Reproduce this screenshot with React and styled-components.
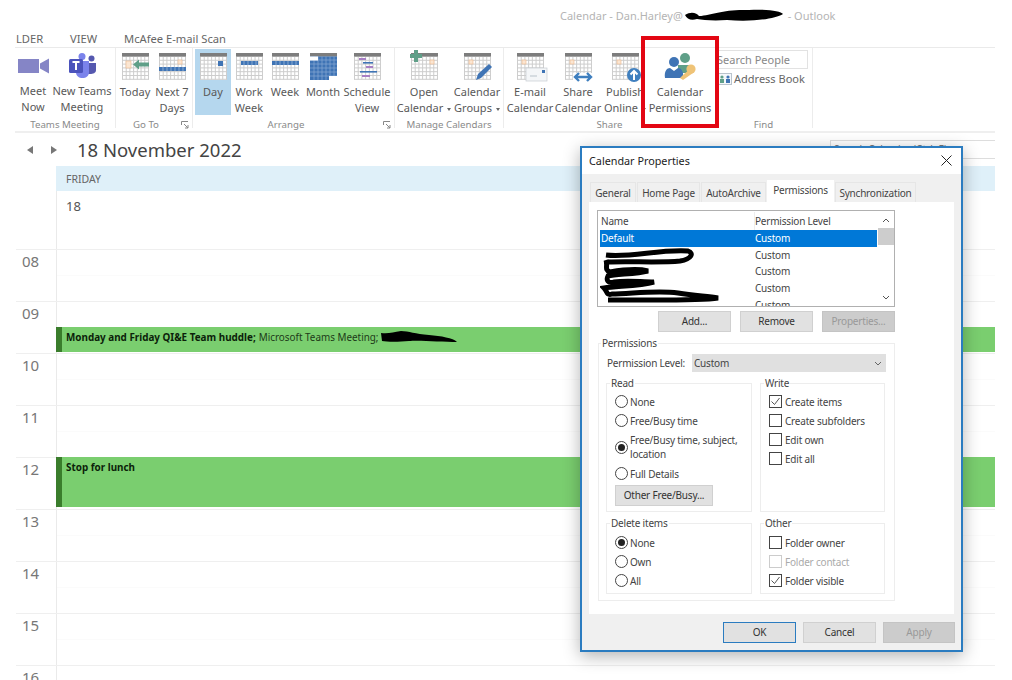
import styled, { createGlobalStyle } from 'styled-components'

const GlobalStyle = createGlobalStyle`
  html, body {
    margin: 0;
    padding: 0;
    background: #fff;
  }
  body {
    font-family: "Noto Sans", "Open Sans", sans-serif;
  }
`

const Page = styled.div`
  position: relative;
  width: 1012px;
  height: 680px;
  overflow: hidden;
  background: #fff;
  color: #555;
`

const TitleBar = styled.div`
  display: flex;
  align-items: center;
  height: 30px;
  padding-left: 560px;
  font-size: 11px;
  color: #b4b4b4;
  white-space: nowrap;
`

const TabBar = styled.div`
  display: flex;
  align-items: center;
  height: 17px;
  padding-left: 16px;
  font-size: 11.2px;
  color: #666;
`

const RibbonTab = styled.span`
  width: ${p => p.$w}px;
`

const Ribbon = styled.div`
  display: flex;
  height: 83px;
  margin: 0 17px 0 15px;
  border-top: 1px solid #eaeaea;
  border-bottom: 2px solid #efefef;
`

const Group = styled.div`
  display: flex;
  flex-direction: column;
  box-sizing: border-box;
  width: ${p => p.$w}px;
  border-right: ${p => (p.$last ? 'none' : '1px solid #ececec')};
  margin-bottom: 3px;
`

const GroupButtons = styled.div`
  display: flex;
  flex: none;
  height: 67px;
  padding-top: 1px;
  padding-left: ${p => p.$pad || 0}px;
`

const GroupLabel = styled.div`
  position: relative;
  flex: none;
  height: 14px;
  margin-top: 2px;
  padding-right: ${p => p.$shift || 0}px;
  font-size: 9.7px;
  line-height: 14px;
  text-align: center;
  color: #8a8a8a;
`

const Launcher = styled.svg`
  position: absolute;
  right: 3px;
  top: 3px;
`

const RibbonButton = styled.div`
  display: flex;
  flex-direction: column;
  align-items: center;
  flex: none;
  width: ${p => p.$w}px;
  height: 66px;
  padding-top: 4px;
  box-sizing: border-box;
  background: ${p => (p.$active ? '#b5d7ee' : 'transparent')};
`

const IconBox = styled.div`
  display: flex;
  justify-content: center;
  align-items: ${p => p.$align || 'flex-start'};
  height: 27px;
  margin-bottom: 4px;
`

const ButtonLine = styled.span`
  font-size: 11px;
  line-height: 16px;
  height: 16px;
  white-space: nowrap;
  color: #595959;
`

const Caret = styled.i`
  display: inline-block;
  margin-left: 4px;
  vertical-align: middle;
  border-left: 2px solid transparent;
  border-right: 2px solid transparent;
  border-top: 3px solid #666;
`

const FindColumn = styled.div`
  display: flex;
  flex-direction: column;
  padding: 1px 0 0 2px;
`

const SearchPeople = styled.div`
  width: 91px;
  height: 19px;
  box-sizing: border-box;
  border: 1px solid #e2e2e2;
  border-left: none;
  font-size: 11px;
  line-height: 17px;
  color: #888;
`

const AddressBook = styled.div`
  display: flex;
  align-items: center;
  gap: 2px;
  margin-top: 2px;
  padding-left: 1px;
  font-size: 11px;
  color: #666;
`

const DateNav = styled.div`
  display: flex;
  align-items: center;
  height: 33px;
  margin-right: 17px;
  padding-left: 27px;
`

const NavArrow = styled.i`
  width: 0;
  height: 0;
  margin-right: ${p => p.$gap}px;
  border-top: 4px solid transparent;
  border-bottom: 4px solid transparent;
  border-right: ${p => (p.$left ? '6px solid #777' : 'none')};
  border-left: ${p => (p.$left ? 'none' : '6px solid #777')};
`

const DateTitle = styled.h1`
  margin: 0;
  font-size: 18.5px;
  font-weight: 400;
  color: #444;
  white-space: nowrap;
`

const SearchCalendar = styled.div`
  width: 165px;
  height: 19px;
  margin-left: auto;
  padding-left: 3px;
  box-sizing: border-box;
  border: 1px solid #ddd;
  border-right: none;
  font-size: 10px;
  line-height: 17px;
  color: #777;
`

const Calendar = styled.div`
  margin-right: 17px;
`

const DayHead = styled.div`
  margin-left: 56px;
  height: 25px;
  padding-left: 10px;
  background: #dff0f9;
  font-size: 10.5px;
  line-height: 26px;
  color: #666;
`

const AllDay = styled.div`
  margin-left: 56px;
  height: 58px;
  padding: 6px 0 0 9px;
  box-sizing: border-box;
  border-left: 1px solid #eaeaea;
  font-size: 13px;
  line-height: 18px;
  color: #555;
`

const HourRow = styled.div`
  display: flex;
  height: 52px;
  margin-left: 16px;
  box-sizing: border-box;
  border-top: 1px solid #efefef;
  &:first-of-type {
    border-top: 2px solid #e3e3e3;
  }
`

const HourLabel = styled.div`
  width: 40px;
  padding: 1px 0 0 6px;
  box-sizing: border-box;
  font-size: 15px;
  line-height: 20px;
  color: #777;
`

const Slots = styled.div`
  display: flex;
  flex-direction: column;
  flex: 1;
  border-left: 1px solid #eaeaea;
`

const Slot = styled.div`
  flex: 1;
  &:first-child {
    border-bottom: 1px solid #fbfbfb;
  }
`

const Event = styled.div`
  display: flex;
  align-items: flex-start;
  height: ${p => (p.$tall ? 50 : 25)}px;
  margin: -1px 0 0 -1px;
  padding: 2px 0 0 4px;
  box-sizing: border-box;
  background: #7ace6f;
  border-left: 6px solid #3a7d2c;
  font-size: 9.9px;
  line-height: 16px;
  color: #1d3a18;
  white-space: nowrap;
`

const EventTitle = styled.b`
  font-weight: 700;
  color: #0c1f0a;
  margin-right: 3px;
`

const RedBox = styled.div`
  position: absolute;
  left: 641px;
  top: 36px;
  width: 78px;
  height: 92px;
  box-sizing: border-box;
  border: 4px solid #e30613;
`

const Dialog = styled.div`
  position: absolute;
  left: 580px;
  top: 146px;
  display: flex;
  flex-direction: column;
  width: 383px;
  height: 506px;
  box-sizing: border-box;
  border: 2px solid #2b7cc0;
  background: #f0f0f0;
  box-shadow: 0 4px 16px rgba(0, 0, 0, 0.3);
  font-size: 10px;
  letter-spacing: -0.2px;
  color: #444;
`

const DialogTitle = styled.div`
  display: flex;
  align-items: center;
  justify-content: space-between;
  height: 26px;
  padding: 0 9px 2px 7px;
  box-sizing: border-box;
  background: #fff;
  font-size: 10.8px;
  letter-spacing: 0;
  color: #222;
`

const TabStrip = styled.div`
  display: flex;
  align-items: flex-end;
  height: 22px;
  margin-top: 6px;
  padding-left: 8px;
  gap: 1px;
`

const DialogTab = styled.div`
  width: ${p => p.$w}px;
  height: ${p => (p.$active ? 22 : 20)}px;
  box-sizing: border-box;
  background: ${p => (p.$active ? '#fff' : '#f0f0f0')};
  border: 1px solid ${p => (p.$active ? '#fff' : '#e6e6e6')};
  border-bottom: none;
  text-align: center;
  line-height: ${p => (p.$active ? 18 : 21)}px;
  color: #444;
  white-space: nowrap;
`

const TabPanel = styled.div`
  width: 365px;
  height: 412px;
  margin-left: 7px;
  padding: 8px 0 0 8px;
  box-sizing: border-box;
  background: #fff;
`

const UserList = styled.div`
  position: relative;
  width: 298px;
  height: 97px;
  box-sizing: border-box;
  border: 1px solid #b0b0b0;
  padding: 1px 0 0 2px;
  overflow: hidden;
`

const ListRow = styled.div`
  display: flex;
  width: 277px;
  height: ${p => (p.$head ? 18 : 16.7)}px;
  line-height: ${p => (p.$head ? 18 : 16.7)}px;
  background: ${p => (p.$selected ? '#0078d7' : 'transparent')};
  color: ${p => (p.$selected ? '#fff' : '#444')};
`

const NameCell = styled.span`
  width: 155px;
  padding-left: 1px;
  box-sizing: border-box;
  border-right: ${p => (p.$head ? '1px solid #eee' : 'none')};
`

const LevelCell = styled.span`
  padding-left: 0;
`

const ScrollBar = styled.div`
  position: absolute;
  right: 0;
  top: 0;
  bottom: 0;
  width: 16px;
`

const ScrollThumb = styled.div`
  position: absolute;
  left: 0;
  right: 0;
  top: 17px;
  height: 17px;
  background: #cdcdcd;
`

const ScrollArrow = styled.svg`
  position: absolute;
  left: 4px;
  ${p => (p.$down ? 'bottom: 6px;' : 'top: 7px;')}
`

const Scribble = styled.svg`
  flex: none;
  ${p => p.$over && 'position: absolute; left: 2px; top: 35px;'}
`

const ListButtons = styled.div`
  display: flex;
  justify-content: flex-end;
  gap: 9px;
  width: 298px;
  margin-top: 4px;
`

const PushButton = styled.div`
  width: ${p => p.$w || 73}px;
  height: 21px;
  box-sizing: border-box;
  background: ${p => (p.$disabled ? '#cccccc' : '#e1e1e1')};
  border: 1px solid ${p => (p.$default ? '#2b7cc0' : p.$disabled ? '#c4c4c4' : '#d0d0d0')};
  text-align: center;
  line-height: 19px;
  color: ${p => (p.$disabled ? '#999' : '#333')};
  white-space: nowrap;
`

const Box = styled.fieldset`
  margin: 0;
  min-width: 0;
  box-sizing: border-box;
  border: 1px solid #ededed;
  padding: ${p => p.$pad || '3px 0 0 8px'};
  height: ${p => p.$h}px;
`

const Legend = styled.legend`
  padding: 0 1px;
  margin-left: -5px;
  line-height: 14px;
  color: #444;
`

const PermissionsBox = styled(Box)`
  width: 297px;
  margin: 4px 0 0 1px;
  padding: 0 0 0 7px;
`

const LevelRow = styled.div`
  display: flex;
  align-items: center;
  height: 18px;
  margin-top: 4px;
`

const LevelLabel = styled.span`
  width: 86px;
  padding-left: 1px;
  box-sizing: border-box;
  white-space: nowrap;
`

const LevelSelect = styled.div`
  display: flex;
  align-items: center;
  justify-content: space-between;
  width: 194px;
  height: 18px;
  padding: 0 4px 0 2px;
  box-sizing: border-box;
  background: #e0e0e0;
`

const BoxGrid = styled.div`
  display: grid;
  grid-template-columns: 146px 125px;
  column-gap: 8px;
  row-gap: 4px;
  margin-top: 4px;
`

const Option = styled.div`
  display: flex;
  align-items: center;
  gap: ${p => (p.$check ? 3 : 2)}px;
  height: ${p => (p.$multi ? 34 : 19)}px;
  line-height: 14px;
  color: ${p => (p.$dim ? '#aaa' : '#444')};
`

const Radio = styled.span`
  flex: none;
  display: flex;
  align-items: center;
  justify-content: center;
  width: 13px;
  height: 13px;
  box-sizing: border-box;
  border: 1px solid #444;
  border-radius: 50%;
  &::after {
    content: '';
    display: ${p => (p.$on ? 'block' : 'none')};
    width: 7px;
    height: 7px;
    border-radius: 50%;
    background: #222;
  }
`

const Check = styled.span`
  flex: none;
  display: flex;
  align-items: center;
  justify-content: center;
  width: 13px;
  height: 13px;
  box-sizing: border-box;
  border: 1px solid ${p => (p.$dim ? '#ccc' : '#444')};
`

const OtherButton = styled(PushButton)`
  margin-top: 2px;
`

const DialogFooter = styled.div`
  display: flex;
  justify-content: flex-end;
  gap: 7px;
  margin-top: 8px;
  padding-right: 6px;
`

function CalIcon({ children }) {
  const cols = [0, 1, 2, 3, 4, 5, 6, 7]
  const rows = [0, 1, 2, 3, 4, 5, 6]
  return (
    <svg width="27" height="27" viewBox="0 0 27 27" style={{ overflow: 'visible' }}>
      <rect x="0" y="0" width="27" height="27" fill="#fff" />
      {cols.map(i => <path key={i} d={`M${0.5 + i * 3.71} 3V26.5`} stroke="#cdcdcd" strokeWidth="1" />)}
      {rows.map(i => <path key={i} d={`M0 ${3.5 + i * 3.8}H27`} stroke="#cdcdcd" strokeWidth="1" />)}
      <rect x="0" y="0" width="27" height="3.5" fill="#7d7d7d" />
      {children}
    </svg>
  )
}

const Orange = () => <rect x="19" y="7" width="4" height="4" fill="#fbe6d2" stroke="#eeb98c" strokeWidth="0.6" />

const Band = ({ x, y, w }) => (
  <>
    <rect x={x} y={y} width={w} height="4" fill="#3f74b5" />
    {[4, 8, 12, 16, 20, 24].filter(c => c > x && c < x + w).map(c => (
      <path key={c} d={`M${c} ${y}v4`} stroke="#9db8d8" strokeWidth="0.8" />
    ))}
  </>
)

const iconParts = {
  today: (
    <>
      <rect x="4" y="8" width="5" height="7" fill="#fbe6d2" stroke="#eeb98c" strokeWidth="0.6" />
      <path d="M11 11.5L17 6.5V9.5H27V13.5H17V16.5Z" fill="#5f9f88" />
    </>
  ),
  next: (
    <>
      <Orange />
      <Band x={0} y={14} w={27} />
    </>
  ),
  day: <rect x="18" y="8" width="5" height="5" fill="#3f74b5" />,
  work: <Band x={5} y={8} w={17} />,
  week: <Band x={0} y={8} w={27} />,
  month: (
    <>
      <rect x="0" y="3.5" width="27" height="23.5" fill="#3f74b5" />
      {[4, 8, 12, 16, 20, 24].map(x => <path key={x} d={`M${x} 3.5V27`} stroke="#86a9d3" strokeWidth="0.7" />)}
      {[7, 11, 15, 19, 23].map(y => <path key={y} d={`M0 ${y}H27`} stroke="#86a9d3" strokeWidth="0.7" />)}
      <rect x="0" y="3.5" width="8" height="4" fill="#fff" />
      <rect x="19" y="23" width="8" height="4" fill="#fff" />
    </>
  ),
  schedule: (
    <>
      <rect x="5" y="5" width="7" height="2" fill="#a77fc4" />
      <rect x="9" y="9" width="10" height="1.6" fill="#3f74b5" />
      <rect x="12" y="13" width="7" height="2" fill="#a77fc4" />
      <rect x="6" y="18" width="17" height="1.6" fill="#3f74b5" />
      <rect x="8" y="22" width="8" height="2" fill="#a77fc4" />
    </>
  ),
  open: (
    <>
      <Orange />
      <path d="M3 -3H7V1H11V5H7V9H3V5H-1V1H3Z" fill="#5f9f88" />
    </>
  ),
  groups: (
    <>
      <rect x="5" y="7" width="4" height="4" fill="#fbe6d2" stroke="#eeb98c" strokeWidth="0.6" />
      <path d="M12 27L14 21L25 11L28 14L17 25Z" fill="#3f74b5" />
    </>
  ),
  email: (
    <>
      <rect x="5" y="7" width="4" height="4" fill="#fbe6d2" stroke="#eeb98c" strokeWidth="0.6" />
      <rect x="9" y="15" width="21" height="13" fill="#f4f6f8" stroke="#c7ccd1" strokeWidth="0.7" />
      <rect x="25" y="17" width="3" height="3" fill="#3f74b5" />
      <path d="M13 23H20" stroke="#ccd3da" strokeWidth="1.5" />
    </>
  ),
  share: (
    <>
      <rect x="5" y="7" width="4" height="4" fill="#fbe6d2" stroke="#eeb98c" strokeWidth="0.6" />
      <rect x="8" y="20" width="19" height="8" fill="#fff" />
      <path d="M10 24H26M14 20L10 24L14 28M22 20L26 24L22 28" fill="none" stroke="#3f7fbf" strokeWidth="2.4" />
    </>
  ),
  publish: (
    <>
      <rect x="5" y="7" width="4" height="4" fill="#fbe6d2" stroke="#eeb98c" strokeWidth="0.6" />
      <circle cx="22" cy="22" r="7" fill="#3f7fbf" />
      <path d="M22 27V18M18.5 21.5L22 18L25.5 21.5" fill="none" stroke="#fff" strokeWidth="2" />
    </>
  ),
}

function VideoIcon() {
  return (
    <svg width="31" height="16" viewBox="0 0 31 16">
      <path d="M0 1H21V15H0ZM22 5.5L31 0.5V15.5L22 10.5Z" fill="#8585c6" />
    </svg>
  )
}

function TeamsIcon() {
  return (
    <svg width="27" height="25" viewBox="0 0 27 25">
      <circle cx="22.5" cy="5.5" r="3" fill="#5558af" />
      <path d="M18 10H27V17C27 20 24 21 21 21H18Z" fill="#5558af" />
      <circle cx="13" cy="3.5" r="3.5" fill="#7b83eb" />
      <path d="M7 8H20V19C20 23 17 25 13.5 25C10 25 7 23 7 19Z" fill="#7b83eb" />
      <rect x="0" y="6" width="14" height="14" rx="1.5" fill="#4b53bc" />
      <path d="M3.5 9H10.5M7 9V17" stroke="#fff" strokeWidth="2" fill="none" />
    </svg>
  )
}

function PermissionsIcon() {
  return (
    <svg width="32" height="27" viewBox="0 0 32 27">
      <circle cx="21" cy="5" r="5" fill="#5f9f88" />
      <path d="M14 12H27V20H14Z" fill="#5f9f88" />
      <circle cx="10" cy="9" r="5" fill="#3f74b5" />
      <path d="M1 25C0 18 3 15 6 15L10 18L14 15C17 15 20 18 19 25Z" fill="#3f74b5" />
      <circle cx="27" cy="16" r="4.6" fill="#efc377" />
      <path d="M25 17L29 20L19 27L16 25L20 21Z" fill="#efc377" />
    </svg>
  )
}

function AddressBookIcon() {
  return (
    <svg width="14" height="12" viewBox="0 0 14 12">
      <rect x="0.5" y="0.5" width="13" height="11" fill="#f4f7fa" stroke="#b9c3cc" />
      <circle cx="4" cy="4" r="1.6" fill="#5f9f88" />
      <rect x="2" y="6" width="4" height="4" fill="#5f9f88" />
      <circle cx="10" cy="4" r="1.6" fill="#3f74b5" />
      <rect x="8" y="6" width="4" height="4" fill="#3f74b5" />
    </svg>
  )
}

function LauncherIcon() {
  return (
    <Launcher width="8" height="8" viewBox="0 0 8 8">
      <path d="M0.5 4V0.5H7M3 3L7 7M7 4V7H4" fill="none" stroke="#888" strokeWidth="1" />
    </Launcher>
  )
}

function RibbonBtn({ w, lines, icon, caret, active }) {
  return (
    <RibbonButton $w={w} $active={active}>
      <IconBox $align={icon === 'video' ? 'center' : undefined}>
        {icon === 'video' && <VideoIcon />}
        {icon === 'teams' && <TeamsIcon />}
        {icon === 'perm' && <PermissionsIcon />}
        {iconParts[icon] && <CalIcon>{iconParts[icon]}</CalIcon>}
      </IconBox>
      {lines.map((line, i) => (
        <ButtonLine key={line}>
          {line}
          {caret && i === lines.length - 1 && <Caret />}
        </ButtonLine>
      ))}
    </RibbonButton>
  )
}

function RadioOption({ label, on, multi }) {
  return (
    <Option $multi={multi}>
      <Radio $on={on} />
      <span>{label}</span>
    </Option>
  )
}

function CheckOption({ label, on, dim }) {
  return (
    <Option $check $dim={dim}>
      <Check $dim={dim}>
        {on && (
          <svg width="11" height="11" viewBox="0 0 11 11">
            <path d="M1.5 5.5L4.5 8.5L9.5 2" fill="none" stroke="#555" strokeWidth="1" />
          </svg>
        )}
      </Check>
      <span>{label}</span>
    </Option>
  )
}

const hours = ['08', '09', '10', '11', '12', '13', '14', '15', '16']

const App = () => {
  return (
    <Page>
      <GlobalStyle />
      <TitleBar>
        Calendar - Dan.Harley@
        <Scribble width="102" height="16" viewBox="0 0 102 16">
          <path d="M2 8C8 4 14 6 16 9C30 8 40 2 66 3C84 2 98 4 100 7C92 12 70 15 44 13C30 14 20 13 14 12C8 14 4 12 2 8Z" fill="#000" />
        </Scribble>
        &nbsp;- Outlook
      </TitleBar>
      <TabBar>
        <RibbonTab $w={54}>LDER</RibbonTab>
        <RibbonTab $w={54}>VIEW</RibbonTab>
        <span>McAfee E-mail Scan</span>
      </TabBar>
      <Ribbon>
        <Group $w={101}>
          <GroupButtons>
            <RibbonBtn w={36} icon="video" lines={['Meet', 'Now']} />
            <RibbonBtn w={62} icon="teams" lines={['New Teams', 'Meeting']} />
          </GroupButtons>
          <GroupLabel>Teams Meeting</GroupLabel>
        </Group>
        <Group $w={77}>
          <GroupButtons>
            <RibbonBtn w={38} icon="today" lines={['Today']} />
            <RibbonBtn w={36} icon="next" lines={['Next 7', 'Days']} />
          </GroupButtons>
          <GroupLabel $shift={16}>Go To<LauncherIcon /></GroupLabel>
        </Group>
        <Group $w={202}>
          <GroupButtons $pad={2}>
            <RibbonBtn w={36} icon="day" lines={['Day']} active />
            <RibbonBtn w={36} icon="work" lines={['Work', 'Week']} />
            <RibbonBtn w={36} icon="week" lines={['Week']} />
            <RibbonBtn w={40} icon="month" lines={['Month']} />
            <RibbonBtn w={48} icon="schedule" lines={['Schedule', 'View']} />
          </GroupButtons>
          <GroupLabel $shift={15}>Arrange<LauncherIcon /></GroupLabel>
        </Group>
        <Group $w={109}>
          <GroupButtons $pad={2}>
            <RibbonBtn w={54} icon="open" lines={['Open', 'Calendar']} caret />
            <RibbonBtn w={52} icon="groups" lines={['Calendar', 'Groups']} caret />
          </GroupButtons>
          <GroupLabel>Manage Calendars</GroupLabel>
        </Group>
        <Group $w={211} $last>
          <GroupButtons $pad={1}>
            <RibbonBtn w={50} icon="email" lines={['E-mail', 'Calendar']} />
            <RibbonBtn w={46} icon="share" lines={['Share', 'Calendar']} />
            <RibbonBtn w={48} icon="publish" lines={['Publish', 'Online']} caret />
            <RibbonBtn w={62} icon="perm" lines={['Calendar', 'Permissions']} />
          </GroupButtons>
          <GroupLabel>Share</GroupLabel>
        </Group>
        <Group $w={98}>
          <GroupButtons>
            <FindColumn>
              <SearchPeople>Search People</SearchPeople>
              <AddressBook><AddressBookIcon />Address Book</AddressBook>
            </FindColumn>
          </GroupButtons>
          <GroupLabel>Find</GroupLabel>
        </Group>
      </Ribbon>
      <DateNav>
        <NavArrow $left $gap={18} />
        <NavArrow $gap={20} />
        <DateTitle>18 November 2022</DateTitle>
        <SearchCalendar>Search Calendar (Ctrl+E)</SearchCalendar>
      </DateNav>
      <Calendar>
        <DayHead>FRIDAY</DayHead>
        <AllDay>18</AllDay>
        {hours.map(h => (
          <HourRow key={h}>
            <HourLabel>{h}</HourLabel>
            <Slots>
              {h === '12' ? (
                <Event $tall><EventTitle>Stop for lunch</EventTitle></Event>
              ) : (
                <>
                  <Slot />
                  <Slot>
                    {h === '09' && (
                      <Event>
                        <EventTitle>Monday and Friday QI&amp;E Team huddle;</EventTitle>
                        Microsoft Teams Meeting;
                        <Scribble width="80" height="16" viewBox="0 0 80 16">
                          <path d="M2 4C10 5 14 3 22 2C30 2 36 5 50 6C62 7 74 9 78 13C64 13 40 11 30 12C20 13 8 13 3 12Z" fill="#000" />
                        </Scribble>
                      </Event>
                    )}
                  </Slot>
                </>
              )}
            </Slots>
          </HourRow>
        ))}
      </Calendar>
      <RedBox />
      <Dialog>
        <DialogTitle>
          Calendar Properties
          <svg width="11" height="11" viewBox="0 0 11 11">
            <path d="M0.5 0.5L10.5 10.5M10.5 0.5L0.5 10.5" stroke="#222" strokeWidth="1" />
          </svg>
        </DialogTitle>
        <TabStrip>
          <DialogTab $w={46}>General</DialogTab>
          <DialogTab $w={63}>Home Page</DialogTab>
          <DialogTab $w={65}>AutoArchive</DialogTab>
          <DialogTab $w={67} $active>Permissions</DialogTab>
          <DialogTab $w={81}>Synchronization</DialogTab>
        </TabStrip>
        <TabPanel>
          <UserList>
            <ListRow $head>
              <NameCell $head>Name</NameCell>
              <LevelCell>Permission Level</LevelCell>
            </ListRow>
            <ListRow $selected>
              <NameCell>Default</NameCell>
              <LevelCell>Custom</LevelCell>
            </ListRow>
            {[1, 2, 3, 4].map(i => (
              <ListRow key={i}>
                <NameCell />
                <LevelCell>Custom</LevelCell>
              </ListRow>
            ))}
            <Scribble $over width="122" height="60" viewBox="0 0 122 60">
              <path d="M6 9C30 12 60 3 88 5C94 7 92 13 80 15C60 17 30 15 8 16M6 14C8 20 4 24 10 26C22 24 36 22 48 25C36 28 16 28 8 30C6 34 8 38 14 36C28 34 40 36 54 36C40 40 18 40 4 42C8 46 6 50 12 48C30 48 56 44 78 47C96 50 108 50 118 52C100 55 60 54 8 54" fill="none" stroke="#000" strokeWidth="5" />
            </Scribble>
            <ScrollBar>
              <ScrollArrow width="8" height="5" viewBox="0 0 8 5">
                <path d="M1 4L4 1L7 4" fill="none" stroke="#555" strokeWidth="1" />
              </ScrollArrow>
              <ScrollThumb />
              <ScrollArrow $down width="8" height="5" viewBox="0 0 8 5">
                <path d="M1 1L4 4L7 1" fill="none" stroke="#555" strokeWidth="1" />
              </ScrollArrow>
            </ScrollBar>
          </UserList>
          <ListButtons>
            <PushButton>Add...</PushButton>
            <PushButton>Remove</PushButton>
            <PushButton $disabled>Properties...</PushButton>
          </ListButtons>
          <PermissionsBox $h={265}>
            <Legend>Permissions</Legend>
            <LevelRow>
              <LevelLabel>Permission Level:</LevelLabel>
              <LevelSelect>
                Custom
                <svg width="8" height="5" viewBox="0 0 8 5">
                  <path d="M1 1L4 4L7 1" fill="none" stroke="#666" strokeWidth="1" />
                </svg>
              </LevelSelect>
            </LevelRow>
            <BoxGrid>
              <Box $h={136} $pad="2px 0 0 8px">
                <Legend>Read</Legend>
                <RadioOption label="None" />
                <RadioOption label="Free/Busy time" />
                <RadioOption multi on label={<>Free/Busy time, subject,<br />location</>} />
                <RadioOption label="Full Details" />
                <OtherButton $w={98}>Other Free/Busy...</OtherButton>
              </Box>
              <Box $h={136} $pad="2px 0 0 8px">
                <Legend>Write</Legend>
                <CheckOption on label="Create items" />
                <CheckOption label="Create subfolders" />
                <CheckOption label="Edit own" />
                <CheckOption label="Edit all" />
              </Box>
              <Box $h={78}>
                <Legend>Delete items</Legend>
                <RadioOption on label="None" />
                <RadioOption label="Own" />
                <RadioOption label="All" />
              </Box>
              <Box $h={78}>
                <Legend>Other</Legend>
                <CheckOption label="Folder owner" />
                <CheckOption dim label="Folder contact" />
                <CheckOption on label="Folder visible" />
              </Box>
            </BoxGrid>
          </PermissionsBox>
        </TabPanel>
        <DialogFooter>
          <PushButton $default>OK</PushButton>
          <PushButton>Cancel</PushButton>
          <PushButton $w={72} $disabled>Apply</PushButton>
        </DialogFooter>
      </Dialog>
    </Page>
  )
}

export default App
